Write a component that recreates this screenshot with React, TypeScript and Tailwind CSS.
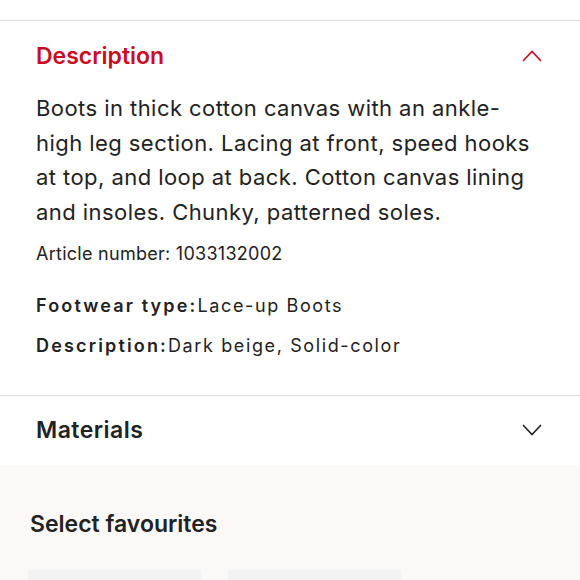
import React from 'react';

const font = { fontFamily: 'Inter, "Noto Sans", sans-serif' };

const Chevron = ({ up, color }: { up?: boolean; color: string }) => (
  <svg width="20" height="12" viewBox="0 0 20 12" fill="none">
    <polyline
      points={up ? '1,11 10,1.5 19,11' : '1,1 10,10.5 19,1'}
      stroke={color}
      strokeWidth="1.6"
    />
  </svg>
);

const Attr = ({ label, value }: { label: string; value: string }) => (
  <p className="text-[18px] leading-[26px]">
    <span className="font-semibold tracking-[0.12em]">{label}</span>
    <span className="tracking-[0.09em]">{value}</span>
  </p>
);

export default function App() {
  return (
    <div className="w-[580px] h-[580px] overflow-hidden bg-white text-[#222]" style={font}>
      <div className="h-[20px]" />
      <section className="border-t border-[#dcdcdc]">
        <div className="h-[70px] px-[36px] flex items-center justify-between">
          <h2 className="text-[23px] font-semibold text-[#cc0d1f]">Description</h2>
          <div className="pr-[2px]">
            <Chevron up color="#cc0d1f" />
          </div>
        </div>
        <div className="px-[36px] pb-[36px]">
          <p className="text-[22px] leading-[34.7px] tracking-[0.02em] whitespace-nowrap">
            Boots in thick cotton canvas with an ankle-
            <br />
            high leg section. Lacing at front, speed hooks
            <br />
            at top, and loop at back. Cotton canvas lining
            <br />
            and insoles. Chunky, patterned soles.
          </p>
          <p className="mt-[11px] text-[18px] leading-[26px] tracking-[0.015em]">Article number: 1033132002</p>
          <div className="mt-[26px] flex flex-col gap-[14px]">
            <Attr label="Footwear type:" value="Lace-up Boots" />
            <Attr label="Description:" value="Dark beige, Solid-color" />
          </div>
        </div>
      </section>
      <section className="border-t border-[#dcdcdc]">
        <div className="h-[69px] px-[36px] flex items-center justify-between">
          <h2 className="text-[23px] font-semibold tracking-[0.02em]">Materials</h2>
          <div className="pr-[2px]">
            <Chevron color="#222" />
          </div>
        </div>
      </section>
      <section className="bg-[#faf9f8] h-full pt-[44px] px-[28px]">
        <h2 className="text-[23px] leading-[30px] font-semibold pl-[2px]">Select favourites</h2>
        <div className="mt-[31px] flex gap-[27px]">
          <div className="w-[173px] h-[200px] bg-[#f3f2f2]" />
          <div className="w-[173px] h-[200px] bg-[#f3f2f2]" />
        </div>
      </section>
    </div>
  );
}
